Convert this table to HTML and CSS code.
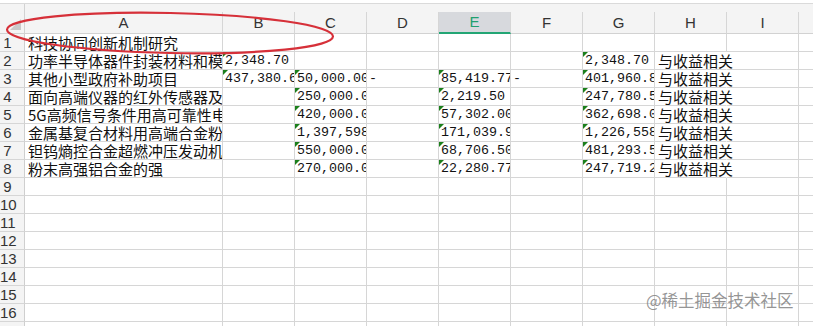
FILE: index.html
```html
<!DOCTYPE html>
<html lang="zh-CN">
<head>
<meta charset="utf-8">
<title>Sheet</title>
<link rel="stylesheet" href="styles.css">
</head>
<body>
<div class="sheet">
  <div class="topbar"></div>
  <div class="head">
    <div class="corner"></div>
    <div class="ch">A</div><div class="ch">B</div><div class="ch">C</div><div class="ch">D</div><div class="ch sel">E</div><div class="ch">F</div><div class="ch">G</div><div class="ch">H</div><div class="ch">I</div><div class="ch"></div>
  </div>
  <div class="grid">
    <div class="rh">1</div><div class="c">科技协同创新机制研究</div><div class="c"></div><div class="c"></div><div class="c"></div><div class="c"></div><div class="c"></div><div class="c"></div><div class="c"></div><div class="c"></div><div class="c"></div>

    <div class="rh">2</div><div class="c">功率半导体器件封装材料和模</div><div class="c num tri">2,348.70</div><div class="c"></div><div class="c"></div><div class="c"></div><div class="c"></div><div class="c num tri">2,348.70</div><div class="c spill">与收益相关</div><div class="c"></div><div class="c"></div>

    <div class="rh">3</div><div class="c">其他小型政府补助项目</div><div class="c num tri">437,380.65</div><div class="c num tri">50,000.00</div><div class="c num">-</div><div class="c num tri">85,419.77</div><div class="c num">-</div><div class="c num tri">401,960.88</div><div class="c spill">与收益相关</div><div class="c"></div><div class="c"></div>

    <div class="rh">4</div><div class="c">面向高端仪器的红外传感器及</div><div class="c"></div><div class="c num tri">250,000.00</div><div class="c"></div><div class="c num tri">2,219.50</div><div class="c"></div><div class="c num tri">247,780.50</div><div class="c spill">与收益相关</div><div class="c"></div><div class="c"></div>

    <div class="rh">5</div><div class="c">5G高频信号条件用高可靠性电</div><div class="c"></div><div class="c num tri">420,000.00</div><div class="c"></div><div class="c num tri">57,302.00</div><div class="c"></div><div class="c num tri">362,698.00</div><div class="c spill">与收益相关</div><div class="c"></div><div class="c"></div>

    <div class="rh">6</div><div class="c">金属基复合材料用高端合金粉</div><div class="c"></div><div class="c num tri">1,397,598.00</div><div class="c"></div><div class="c num tri">171,039.90</div><div class="c"></div><div class="c num tri">1,226,558.10</div><div class="c spill">与收益相关</div><div class="c"></div><div class="c"></div>

    <div class="rh">7</div><div class="c">钽钨熵控合金超燃冲压发动机</div><div class="c"></div><div class="c num tri">550,000.00</div><div class="c"></div><div class="c num tri">68,706.50</div><div class="c"></div><div class="c num tri">481,293.50</div><div class="c spill">与收益相关</div><div class="c"></div><div class="c"></div>

    <div class="rh">8</div><div class="c">粉末高强铝合金的强</div><div class="c"></div><div class="c num tri">270,000.00</div><div class="c"></div><div class="c num tri">22,280.77</div><div class="c"></div><div class="c num tri">247,719.23</div><div class="c spill">与收益相关</div><div class="c"></div><div class="c"></div>

    <div class="rh">9</div><div class="c"></div><div class="c"></div><div class="c"></div><div class="c"></div><div class="c"></div><div class="c"></div><div class="c"></div><div class="c"></div><div class="c"></div><div class="c"></div>
    <div class="rh">10</div><div class="c"></div><div class="c"></div><div class="c"></div><div class="c"></div><div class="c"></div><div class="c"></div><div class="c"></div><div class="c"></div><div class="c"></div><div class="c"></div>
    <div class="rh">11</div><div class="c"></div><div class="c"></div><div class="c"></div><div class="c"></div><div class="c"></div><div class="c"></div><div class="c"></div><div class="c"></div><div class="c"></div><div class="c"></div>
    <div class="rh">12</div><div class="c"></div><div class="c"></div><div class="c"></div><div class="c"></div><div class="c"></div><div class="c"></div><div class="c"></div><div class="c"></div><div class="c"></div><div class="c"></div>
    <div class="rh">13</div><div class="c"></div><div class="c"></div><div class="c"></div><div class="c"></div><div class="c"></div><div class="c"></div><div class="c"></div><div class="c"></div><div class="c"></div><div class="c"></div>
    <div class="rh">14</div><div class="c"></div><div class="c"></div><div class="c"></div><div class="c"></div><div class="c"></div><div class="c"></div><div class="c"></div><div class="c"></div><div class="c"></div><div class="c"></div>
    <div class="rh">15</div><div class="c"></div><div class="c"></div><div class="c"></div><div class="c"></div><div class="c"></div><div class="c"></div><div class="c"></div><div class="c"></div><div class="c"></div><div class="c"></div>
    <div class="rh">16</div><div class="c"></div><div class="c"></div><div class="c"></div><div class="c"></div><div class="c"></div><div class="c"></div><div class="c"></div><div class="c"></div><div class="c"></div><div class="c"></div>
    <div class="rh">17</div><div class="c"></div><div class="c"></div><div class="c"></div><div class="c"></div><div class="c"></div><div class="c"></div><div class="c"></div><div class="c"></div><div class="c"></div><div class="c"></div>
  </div>

  <svg class="annot" width="813" height="326" viewBox="0 0 813 326" aria-hidden="true">
    <ellipse cx="170" cy="33" rx="163" ry="20" fill="none" stroke="#d63039" stroke-width="2.2" transform="rotate(1.2 170 33)"/>
  </svg>
  <div class="watermark">@稀土掘金技术社区</div>
</div>
</body>
</html>
```

FILE: styles.css
```css
html, body {
  margin: 0;
  padding: 0;
  background: #ffffff;
}

body {
  width: 813px;
  height: 326px;
  overflow: hidden;
}

.sheet {
  position: relative;
  width: 813px;
  height: 326px;
  overflow: hidden;
  color: #111111;
  font-family: "Noto Sans CJK SC", "Liberation Sans", sans-serif;
}

.topbar {
  height: 3px;
  border-bottom: 1px solid #dadada;
  background: #ffffff;
}

.head {
  display: grid;
  grid-template-columns: 25px 198px repeat(9, 72px);
  grid-template-rows: 8px 22px;
  background: #f4f4f4;
}

.corner {
  grid-row: 1 / 3;
  grid-column: 1;
  position: relative;
  border-right: 1px solid #d2d2d2;
  border-bottom: 1px solid #d2d2d2;
  box-sizing: border-box;
}

.corner::after {
  content: "";
  position: absolute;
  right: 3px;
  bottom: 3px;
  width: 0;
  height: 0;
  border-left: 11px solid transparent;
  border-bottom: 11px solid #c9c9c9;
}

.ch {
  grid-row: 2;
  box-sizing: border-box;
  border-right: 1px solid #d6d6d6;
  border-bottom: 1px solid #d2d2d2;
  text-align: center;
  line-height: 21px;
  font-family: "Liberation Sans", Arial, sans-serif;
  font-size: 15px;
  color: #333333;
}

.ch.sel {
  background: #d7d9dd;
  border-bottom: 2px solid #22a574;
  line-height: 20px;
  color: #20a06f;
}

.grid {
  display: grid;
  grid-template-columns: 25px 198px repeat(9, 72px);
  grid-auto-rows: 18px;
}

.rh {
  box-sizing: border-box;
  background: #f4f4f4;
  border-right: 1px solid #cfcfcf;
  border-bottom: 1px solid #d6d6d6;
  padding-right: 9px;
  text-align: center;
  font-family: "Liberation Sans", Arial, sans-serif;
  font-size: 15px;
  line-height: 17px;
  color: #333333;
}

.c {
  box-sizing: border-box;
  position: relative;
  border-right: 1px solid #d6d6d6;
  border-bottom: 1px solid #d6d6d6;
  padding-left: 3px;
  white-space: nowrap;
  overflow: hidden;
  font-family: "Noto Sans CJK SC", sans-serif;
  font-size: 15px;
  line-height: 17px;
  color: #111111;
}

.num {
  font-family: "Liberation Mono", "DejaVu Sans Mono", monospace;
  font-size: 13.33px;
  line-height: 18px;
  padding-left: 2px;
}

.tri::before {
  content: "";
  position: absolute;
  left: 0;
  top: 0;
  width: 0;
  height: 0;
  border-top: 5px solid #1b7f1b;
  border-right: 5px solid transparent;
}

.spill {
  overflow: visible;
  border-right-color: transparent;
}

.annot {
  position: absolute;
  left: 0;
  top: 0;
  pointer-events: none;
}

.watermark {
  position: absolute;
  left: 646px;
  top: 289px;
  font-family: "Noto Sans CJK SC", sans-serif;
  font-size: 16.5px;
  line-height: 22px;
  color: rgba(130, 130, 130, 0.85);
  white-space: nowrap;
}
```
